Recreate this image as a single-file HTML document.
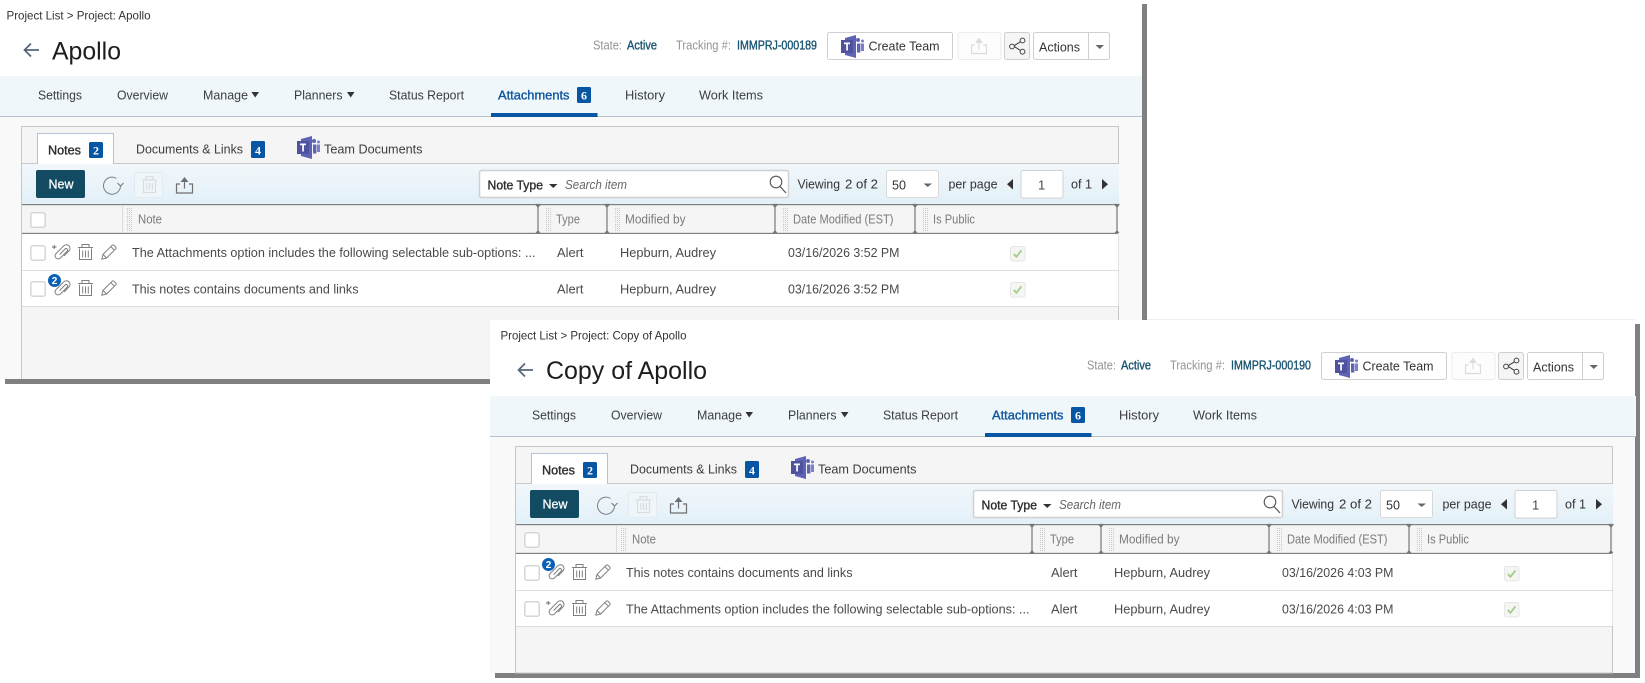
<!DOCTYPE html>
<html lang="en">
<head>
<meta charset="utf-8">
<title>Project Attachments</title>
<style>
html,body{margin:0;padding:0;background:#fff;width:1645px;height:683px;overflow:hidden}
svg{display:block}
text{font-family:"Liberation Sans",sans-serif;font-size:13px;fill:#3a3a3a}
.nav{font-size:13px;fill:#3d3d3d}
.act{font-size:13px;fill:#0d549c;stroke:#0d549c;stroke-width:.35}
.crumb{font-size:12px;fill:#333}
.title{font-size:25px;fill:#1d1d1d}
.lab{font-size:12.5px;fill:#939393}
.val{font-size:12.5px;fill:#175470;stroke:#175470;stroke-width:.35}
.th{font-size:12.5px;fill:#7b7b7b}
.td{font-size:13px;fill:#4a4a4a}
.dk{font-size:13px;fill:#333}
.semi{font-size:13px;fill:#2b2b2b;stroke:#2b2b2b;stroke-width:.35}
.bd{font-family:"Liberation Serif",serif;font-size:12px;font-weight:bold;fill:#fff;text-anchor:middle}
.ital{font-size:12.5px;font-style:italic;fill:#666}
.btn{font-size:13px;fill:#fff;stroke:#fff;stroke-width:.25}
.ic{fill:none;stroke:#7f7f7f;stroke-width:1}
.icl{fill:none;stroke:#dcdcdc;stroke-width:1.2}
</style>
</head>
<body>
<svg xmlns="http://www.w3.org/2000/svg" width="1645" height="683" viewBox="0 0 1645 683">
<defs>
<linearGradient id="tb" x1="0" y1="0" x2="0" y2="1"><stop offset="0" stop-color="#f1f7fb"/><stop offset="1" stop-color="#e3f0f8"/></linearGradient>
<pattern id="dots" width="2" height="2" patternUnits="userSpaceOnUse"><rect width="1" height="1" fill="#c9c9c9"/></pattern>

<g id="teams">
<path d="M4 3 L15 0 V23 L4 20 Z" fill="#5f63b5"/>
<rect x="0" y="5" width="12" height="13" fill="#4e529f"/>
<rect x="3" y="7.5" width="6" height="1.7" fill="#fff"/><rect x="5.2" y="7.5" width="1.7" height="8" fill="#fff"/>
<rect x="15" y="3" width="4" height="4" rx="2" fill="#5f63b5"/>
<rect x="20" y="4.5" width="3" height="3" rx="1.5" fill="#7b80c9"/>
<rect x="16" y="8.5" width="3.4" height="9" fill="#5f63b5"/>
<rect x="20" y="8.5" width="3" height="7.5" fill="#7b80c9"/>
</g>
<g id="clip"><path class="ic" d="M5.6 10.6 L11 5 A1.5 1.5 0 0 1 13.2 7.1 L6.4 14 A3 3 0 0 1 2 9.6 L9.8 1.8 A3.6 3.6 0 0 1 15 6.9 L10 12"/></g>
<g id="trash"><path class="ic" d="M1.5 4.5 V15.5 H13.5 V4.5 M0 3.5 H15 M4 3.5 V.5 H11 V3.5 M4.7 6.5 V13.5 M7.5 6.5 V13.5 M10.3 6.5 V13.5"/></g>
<g id="pencil"><path class="ic" d="M.8 15.2 L2 10.4 L11.2 1.2 Q12 .5 12.9 1.2 L14.8 3.1 Q15.5 4 14.8 4.8 L5.6 14 Z M2 10.4 L5.6 14 M9.8 2.6 L13.4 6.2"/></g>
<g id="cb"><rect x=".8" y=".8" width="14.4" height="14.4" rx="2" fill="#fff" stroke="#d6d6d6" stroke-width="1.5"/></g>
<g id="chk"><rect x=".5" y=".5" width="14.5" height="14.5" rx="2" fill="#f5f5f5" stroke="#e6e6e6"/><path d="M3.8 8 L6.4 10.8 L11.4 4.4" fill="none" stroke="#a3cc88" stroke-width="1.8"/></g>
<g id="grip"><rect width="5" height="23" fill="url(#dots)"/></g>
<g id="cap"><path d="M-2.5 204.5 H2.5 M0 204 V233.5" stroke="#777" stroke-width="1.2" fill="none"/><path d="M-2.5 205 L0 208 L2.5 205 Z M-2.5 233 L0 230 L2.5 233 Z" fill="#777"/></g>

<g id="chrome">
<!-- nav band -->
<rect x="-4" y="76" width="1146" height="41" fill="#eff7fb"/>
<rect x="-4" y="116" width="1146" height="1" fill="#b6c1cc"/>
<rect x="491" y="113" width="106.500" height="4" fill="#0756a4"/>
<!-- header buttons -->
<rect x="827.5" y="32.500" width="125" height="27" rx="2" fill="#fff" stroke="#cfcfcf"/>
<use href="#teams" x="841" y="35"/>
<rect x="958" y="32.500" width="43" height="27" rx="2" fill="#fdfdfd" stroke="#ececec"/>
<path class="icl" d="M975 45 H971.500 V53.500 H986.500 V45 H983 M979 49.500 V39"/><path d="M975 43 L979 37.500 L983 43 Z" fill="#dcdcdc"/>
<rect x="1004.500" y="32.500" width="25" height="27" rx="2" fill="#f5f5f5" stroke="#cfcfcf"/>
<path d="M1021 41.500 L1013.500 46 L1021 50.800" fill="none" stroke="#444" stroke-width="1.100"/>
<circle cx="1022.500" cy="40.500" r="2.400" fill="#f5f5f5" stroke="#444"/><circle cx="1012" cy="46.500" r="2.400" fill="#f5f5f5" stroke="#444"/><circle cx="1022.500" cy="51.700" r="2.400" fill="#f5f5f5" stroke="#444"/>
<rect x="1033.500" y="32.500" width="76" height="27" rx="2" fill="#fff" stroke="#cfcfcf"/>
<path d="M1088.500 33 V59" stroke="#cfcfcf"/>
<path d="M1095.500 45 H1104 L1099.800 49 Z" fill="#666"/>
<!-- tabs -->
<rect x="22" y="163" width="1097" height="1" fill="#c8c8c8"/>
<path d="M37.500 164 V133.500 H113.500 V164 Z" fill="#fff" stroke="#b4c2d8"/>
<rect x="38" y="162" width="75" height="3" fill="#fff"/>
<rect x="89" y="142" width="14" height="16" rx="1.500" fill="#0756a4"/>
<rect x="251" y="141" width="14" height="17" rx="1.500" fill="#0756a4"/>
<use href="#teams" x="297" y="136"/>
<rect x="577" y="87" width="14" height="16" rx="1.500" fill="#0756a4"/>
<!-- toolbar -->
<rect x="22" y="164" width="1097" height="40" fill="url(#tb)"/>
<rect x="36" y="170" width="49" height="28" rx="2" fill="#134b63"/>
<path class="ic" d="M116.500 178.500 A8.500 8.500 0 1 0 120.500 185.500" stroke-width="1.100"/><path d="M117.500 183 L120.500 186 L123.500 183" fill="none" stroke="#7a7a7a" stroke-width="1.100"/>
<rect x="134.500" y="172.500" width="28" height="25" rx="1.500" fill="#eff6fa" stroke="#e3ebf0"/>
<path class="icl" d="M143.500 181 V192.500 H155.500 V181 M142 180 H157 M146 180 V176.700 H153 V180 M146.700 183 V190 M149.500 183 V190 M152.300 183 V190" stroke-width="1.500"/>
<path d="M180 184 H176.500 V193 H192.500 V184 H189 M184.500 188.500 V179" fill="none" stroke="#6f6f6f" stroke-width="1.200"/><path d="M180.500 182 L184.500 177 L188.500 182 Z" fill="#6f6f6f"/>
<rect x="479.500" y="170.500" width="309" height="27" rx="2" fill="#fff" stroke="#d0d0d0" stroke-width="1.500"/>
<path d="M549 184 H557.500 L553.200 188 Z" fill="#333"/>
<circle cx="776" cy="182" r="5.800" fill="none" stroke="#555" stroke-width="1.100"/><path d="M780 186.500 L786 193" stroke="#555" stroke-width="1.200"/>
<rect x="886.500" y="170.500" width="52" height="27" rx="2" fill="#fff" stroke="#d8d8d8"/>
<path d="M923.500 183.500 H932 L927.700 187 Z" fill="#666"/>
<path d="M1013 179 V189.500 L1007 184.200 Z" fill="#333"/>
<rect x="1021" y="170.500" width="42" height="27.500" rx="2" fill="#fff" stroke="#d0d0d0"/>
<path d="M1102 179 V189.500 L1108 184.200 Z" fill="#333"/>
<!-- grid header -->
<rect x="22" y="204" width="1097" height="30" fill="#f5f5f5"/>
<rect x="22" y="204" width="1096" height="1.200" fill="#808080"/>
<rect x="22" y="232.800" width="1096" height="1.200" fill="#808080"/>
<rect x="122" y="205" width="1" height="28" fill="#dcdcdc"/>
<use href="#cb" x="30" y="212"/>
<use href="#grip" x="127" y="208"/><use href="#grip" x="546" y="208"/><use href="#grip" x="615" y="208"/><use href="#grip" x="783" y="208"/><use href="#grip" x="923" y="208"/>
<use href="#cap" x="538"/><use href="#cap" x="607"/><use href="#cap" x="775"/><use href="#cap" x="915"/><use href="#cap" x="1117"/>
<!-- rows -->
<rect x="22" y="234" width="1096.500" height="72" fill="#fff"/>
<rect x="22" y="270" width="1096.500" height="1" fill="#e0e0e0"/>
<rect x="22" y="306" width="1096.500" height="1" fill="#dcdcdc"/>
<use href="#chk" x="1010" y="246"/><use href="#chk" x="1010" y="282"/>
</g>
<g id="plusrow">
<use href="#cb" x="30" y="0"/>
<path d="M52 2 H56.500 M54.200 0 V4" stroke="#666" stroke-width=".9"/>
<use href="#clip" x="54" y="-1"/><use href="#trash" x="78" y="-1"/><use href="#pencil" x="101" y="-1"/>
</g>
<g id="badgerow">
<use href="#cb" x="30" y="0"/>
<use href="#clip" x="54" y="-1"/>
<use href="#trash" x="78" y="-1"/><use href="#pencil" x="101" y="-1"/>
<circle cx="54.500" cy="-.5" r="6.500" fill="#0a60b5"/>
</g>
</defs>

<!-- PANEL 1 -->
<rect x="1142" y="4" width="5" height="380" fill="#808080"/>
<rect x="5" y="379" width="1142" height="5" fill="#808080"/>
<rect x="0" y="0" width="1142" height="379" fill="#fff"/>
<rect x="0" y="117" width="1142" height="262" fill="#f9f9f9"/>
<rect x="21.500" y="126.500" width="1097" height="260" fill="#f5f5f5" stroke="#c6c6c6"/>
<rect x="0" y="379" width="5" height="8" fill="#fff"/><rect x="5" y="379" width="1142" height="5" fill="#808080"/><rect x="0" y="384" width="1147" height="4" fill="#fff"/>
<use href="#chrome"/>
<use href="#plusrow" y="245"/>
<use href="#badgerow" y="281"/>
<text x="54.500" y="284" style="font-size:10px;font-weight:bold;fill:#fff;text-anchor:middle">2</text>
<text class="crumb" x="6.500" y="19.500" textLength="144" lengthAdjust="spacingAndGlyphs">Project List &gt; Project: Apollo</text>
<text class="title" x="52" y="59.500" textLength="69" lengthAdjust="spacingAndGlyphs">Apollo</text>
<text class="lab" x="593" y="49.500" textLength="29" lengthAdjust="spacingAndGlyphs">State:</text>
<text class="val" x="627" y="49.500" textLength="30" lengthAdjust="spacingAndGlyphs">Active</text>
<text class="lab" x="676" y="49.500" textLength="55" lengthAdjust="spacingAndGlyphs">Tracking #:</text>
<text class="val" x="737" y="49.500" textLength="80" lengthAdjust="spacingAndGlyphs">IMMPRJ-000189</text>
<text class="dk" x="868.500" y="50.500" textLength="71" lengthAdjust="spacingAndGlyphs">Create Team</text>
<text class="dk" x="1039" y="51.500" textLength="41" lengthAdjust="spacingAndGlyphs">Actions</text>
<text class="nav" x="38" y="99.500" textLength="44" lengthAdjust="spacingAndGlyphs">Settings</text>
<text class="nav" x="117" y="99.500" textLength="51" lengthAdjust="spacingAndGlyphs">Overview</text>
<text class="nav" x="203" y="99.500" textLength="45" lengthAdjust="spacingAndGlyphs">Manage</text>
<path d="M251.500 92 H259 L255.200 97.500 Z" fill="#333"/>
<text class="nav" x="294" y="99.500" textLength="48.500" lengthAdjust="spacingAndGlyphs">Planners</text>
<path d="M347 92 H354.500 L350.700 97.500 Z" fill="#333"/>
<text class="nav" x="389" y="99.500" textLength="75" lengthAdjust="spacingAndGlyphs">Status Report</text>
<text class="act" x="498" y="99.500" textLength="71.500" lengthAdjust="spacingAndGlyphs">Attachments</text>
<text class="bd" x="584" y="99.500">6</text>
<text class="nav" x="625" y="99.500" textLength="40" lengthAdjust="spacingAndGlyphs">History</text>
<text class="nav" x="699" y="99.500" textLength="64" lengthAdjust="spacingAndGlyphs">Work Items</text>
<text class="semi" x="48" y="154.500" textLength="33" lengthAdjust="spacingAndGlyphs">Notes</text>
<text class="bd" x="96" y="154.500">2</text>
<text class="nav" x="136" y="153.500" textLength="107" lengthAdjust="spacingAndGlyphs">Documents &amp; Links</text>
<text class="bd" x="258" y="154.500">4</text>
<text class="nav" x="324" y="153.500" textLength="98.500" lengthAdjust="spacingAndGlyphs">Team Documents</text>
<text class="btn" x="48.500" y="188.500" textLength="25" lengthAdjust="spacingAndGlyphs">New</text>
<text class="semi" x="487.500" y="189.500" textLength="55.500" lengthAdjust="spacingAndGlyphs">Note Type</text>
<text class="ital" x="565" y="189" textLength="62" lengthAdjust="spacingAndGlyphs">Search item</text>
<text class="dk" x="797.500" y="188.500" textLength="42.500" lengthAdjust="spacingAndGlyphs">Viewing</text>
<text class="dk" x="845" y="188.500" textLength="33" lengthAdjust="spacingAndGlyphs">2 of 2</text>
<text class="dk" x="892" y="189.500" textLength="14" lengthAdjust="spacingAndGlyphs">50</text>
<text class="dk" x="948.500" y="188.500" textLength="49" lengthAdjust="spacingAndGlyphs">per page</text>
<text class="td" x="1038" y="189.500">1</text>
<text class="dk" x="1071" y="188.500" textLength="21" lengthAdjust="spacingAndGlyphs">of 1</text>
<text class="th" x="138" y="223.500" textLength="24" lengthAdjust="spacingAndGlyphs">Note</text>
<text class="th" x="556" y="223.500" textLength="24" lengthAdjust="spacingAndGlyphs">Type</text>
<text class="th" x="625" y="223.500" textLength="60.500" lengthAdjust="spacingAndGlyphs">Modified by</text>
<text class="th" x="793" y="223.500" textLength="100.500" lengthAdjust="spacingAndGlyphs">Date Modified (EST)</text>
<text class="th" x="933" y="223.500" textLength="42" lengthAdjust="spacingAndGlyphs">Is Public</text>
<text class="td" x="132" y="257" textLength="403.500" lengthAdjust="spacingAndGlyphs">The Attachments option includes the following selectable sub-options: ...</text>
<text class="td" x="557" y="257" textLength="26.500" lengthAdjust="spacingAndGlyphs">Alert</text>
<text class="td" x="620" y="257" textLength="96" lengthAdjust="spacingAndGlyphs">Hepburn, Audrey</text>
<text class="td" x="788" y="257" textLength="111.500" lengthAdjust="spacingAndGlyphs">03/16/2026 3:52 PM</text>
<text class="td" x="132" y="293.500" textLength="226.500" lengthAdjust="spacingAndGlyphs">This notes contains documents and links</text>
<text class="td" x="557" y="293.500" textLength="26.500" lengthAdjust="spacingAndGlyphs">Alert</text>
<text class="td" x="620" y="293.500" textLength="96" lengthAdjust="spacingAndGlyphs">Hepburn, Audrey</text>
<text class="td" x="788" y="293.500" textLength="111.500" lengthAdjust="spacingAndGlyphs">03/16/2026 3:52 PM</text>

<!-- PANEL 2 -->
<rect x="1635" y="324" width="5" height="354" fill="#808080"/>
<rect x="495" y="673" width="1145" height="5" fill="#808080"/>
<rect x="1147" y="319" width="488" height="1" fill="#eeeeee"/>
<rect x="490" y="320" width="1145" height="353" fill="#fff"/>
<g transform="translate(494 320)">
<rect x="-4" y="117" width="1145" height="236" fill="#f9f9f9"/>
<rect x="21.500" y="126.500" width="1097" height="226.500" fill="#f5f5f5" stroke="#c6c6c6"/>
<use href="#chrome"/>
<use href="#badgerow" y="245"/>
<text x="54.500" y="248" style="font-size:10px;font-weight:bold;fill:#fff;text-anchor:middle">2</text>
<use href="#plusrow" y="281"/>
<text class="crumb" x="6.500" y="19.500" textLength="186" lengthAdjust="spacingAndGlyphs">Project List &gt; Project: Copy of Apollo</text>
<text class="title" x="52" y="59" textLength="161" lengthAdjust="spacingAndGlyphs">Copy of Apollo</text>
<text class="lab" x="593" y="49.500" textLength="29" lengthAdjust="spacingAndGlyphs">State:</text>
<text class="val" x="627" y="49.500" textLength="30" lengthAdjust="spacingAndGlyphs">Active</text>
<text class="lab" x="676" y="49.500" textLength="55" lengthAdjust="spacingAndGlyphs">Tracking #:</text>
<text class="val" x="737" y="49.500" textLength="80" lengthAdjust="spacingAndGlyphs">IMMPRJ-000190</text>
<text class="dk" x="868.500" y="50.500" textLength="71" lengthAdjust="spacingAndGlyphs">Create Team</text>
<text class="dk" x="1039" y="51.500" textLength="41" lengthAdjust="spacingAndGlyphs">Actions</text>
<text class="nav" x="38" y="99.500" textLength="44" lengthAdjust="spacingAndGlyphs">Settings</text>
<text class="nav" x="117" y="99.500" textLength="51" lengthAdjust="spacingAndGlyphs">Overview</text>
<text class="nav" x="203" y="99.500" textLength="45" lengthAdjust="spacingAndGlyphs">Manage</text>
<path d="M251.500 92 H259 L255.200 97.500 Z" fill="#333"/>
<text class="nav" x="294" y="99.500" textLength="48.500" lengthAdjust="spacingAndGlyphs">Planners</text>
<path d="M347 92 H354.500 L350.700 97.500 Z" fill="#333"/>
<text class="nav" x="389" y="99.500" textLength="75" lengthAdjust="spacingAndGlyphs">Status Report</text>
<text class="act" x="498" y="99.500" textLength="71.500" lengthAdjust="spacingAndGlyphs">Attachments</text>
<text class="bd" x="584" y="99.500">6</text>
<text class="nav" x="625" y="99.500" textLength="40" lengthAdjust="spacingAndGlyphs">History</text>
<text class="nav" x="699" y="99.500" textLength="64" lengthAdjust="spacingAndGlyphs">Work Items</text>
<text class="semi" x="48" y="154.500" textLength="33" lengthAdjust="spacingAndGlyphs">Notes</text>
<text class="bd" x="96" y="154.500">2</text>
<text class="nav" x="136" y="153.500" textLength="107" lengthAdjust="spacingAndGlyphs">Documents &amp; Links</text>
<text class="bd" x="258" y="154.500">4</text>
<text class="nav" x="324" y="153.500" textLength="98.500" lengthAdjust="spacingAndGlyphs">Team Documents</text>
<text class="btn" x="48.500" y="188.500" textLength="25" lengthAdjust="spacingAndGlyphs">New</text>
<text class="semi" x="487.500" y="189.500" textLength="55.500" lengthAdjust="spacingAndGlyphs">Note Type</text>
<text class="ital" x="565" y="189" textLength="62" lengthAdjust="spacingAndGlyphs">Search item</text>
<text class="dk" x="797.500" y="188.500" textLength="42.500" lengthAdjust="spacingAndGlyphs">Viewing</text>
<text class="dk" x="845" y="188.500" textLength="33" lengthAdjust="spacingAndGlyphs">2 of 2</text>
<text class="dk" x="892" y="189.500" textLength="14" lengthAdjust="spacingAndGlyphs">50</text>
<text class="dk" x="948.500" y="188.500" textLength="49" lengthAdjust="spacingAndGlyphs">per page</text>
<text class="td" x="1038" y="189.500">1</text>
<text class="dk" x="1071" y="188.500" textLength="21" lengthAdjust="spacingAndGlyphs">of 1</text>
<text class="th" x="138" y="223.500" textLength="24" lengthAdjust="spacingAndGlyphs">Note</text>
<text class="th" x="556" y="223.500" textLength="24" lengthAdjust="spacingAndGlyphs">Type</text>
<text class="th" x="625" y="223.500" textLength="60.500" lengthAdjust="spacingAndGlyphs">Modified by</text>
<text class="th" x="793" y="223.500" textLength="100.500" lengthAdjust="spacingAndGlyphs">Date Modified (EST)</text>
<text class="th" x="933" y="223.500" textLength="42" lengthAdjust="spacingAndGlyphs">Is Public</text>
<text class="td" x="132" y="257" textLength="226.500" lengthAdjust="spacingAndGlyphs">This notes contains documents and links</text>
<text class="td" x="557" y="257" textLength="26.500" lengthAdjust="spacingAndGlyphs">Alert</text>
<text class="td" x="620" y="257" textLength="96" lengthAdjust="spacingAndGlyphs">Hepburn, Audrey</text>
<text class="td" x="788" y="257" textLength="111.500" lengthAdjust="spacingAndGlyphs">03/16/2026 4:03 PM</text>
<text class="td" x="132" y="293.500" textLength="403.500" lengthAdjust="spacingAndGlyphs">The Attachments option includes the following selectable sub-options: ...</text>
<text class="td" x="557" y="293.500" textLength="26.500" lengthAdjust="spacingAndGlyphs">Alert</text>
<text class="td" x="620" y="293.500" textLength="96" lengthAdjust="spacingAndGlyphs">Hepburn, Audrey</text>
<text class="td" x="788" y="293.500" textLength="111.500" lengthAdjust="spacingAndGlyphs">03/16/2026 4:03 PM</text>
</g>
<!-- back arrows -->
<path d="M39 50 H24.500 M31 43.500 L24.500 50 L31 56.500" fill="none" stroke="#56657a" stroke-width="1.700"/>
<path d="M533 370 H518.500 M525 363.500 L518.500 370 L525 376.500" fill="none" stroke="#56657a" stroke-width="1.700"/>
</svg>
</body>
</html>
